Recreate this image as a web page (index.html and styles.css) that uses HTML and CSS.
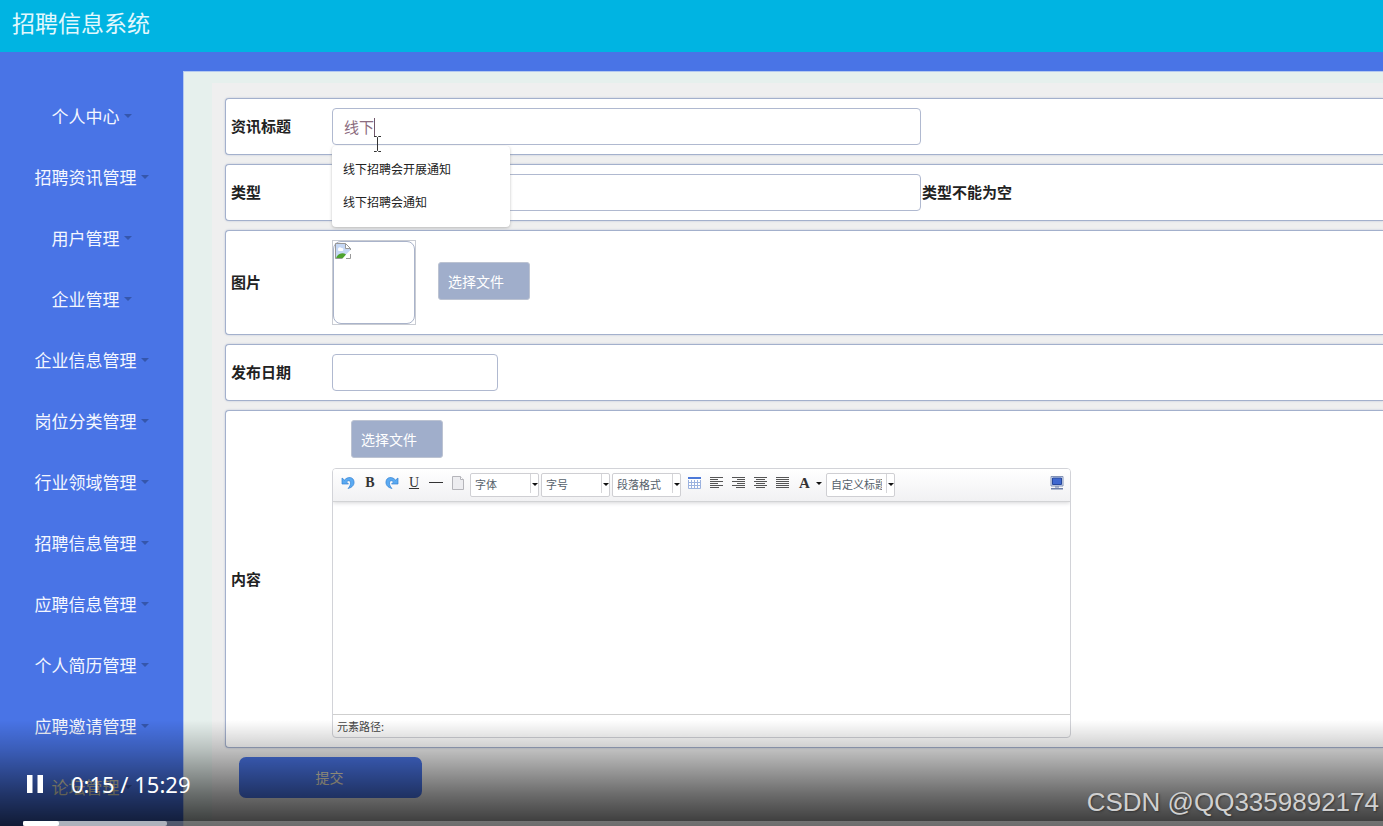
FILE: index.html
```html
<!DOCTYPE html>
<html lang="zh-CN">
<head>
<meta charset="utf-8">
<title>招聘信息系统</title>
<link rel="stylesheet" href="styles.css">
</head>
<body>
<div class="screen">
  <header class="topbar"><h1 class="brand">招聘信息系统</h1></header>
  <div class="layout">
    <nav class="sidebar">
      <button class="nav-item" type="button">个人中心<span class="caret"></span></button>
      <button class="nav-item" type="button">招聘资讯管理<span class="caret"></span></button>
      <button class="nav-item" type="button">用户管理<span class="caret"></span></button>
      <button class="nav-item" type="button">企业管理<span class="caret"></span></button>
      <button class="nav-item" type="button">企业信息管理<span class="caret"></span></button>
      <button class="nav-item" type="button">岗位分类管理<span class="caret"></span></button>
      <button class="nav-item" type="button">行业领域管理<span class="caret"></span></button>
      <button class="nav-item" type="button">招聘信息管理<span class="caret"></span></button>
      <button class="nav-item" type="button">应聘信息管理<span class="caret"></span></button>
      <button class="nav-item" type="button">个人简历管理<span class="caret"></span></button>
      <button class="nav-item" type="button">应聘邀请管理<span class="caret"></span></button>
      <button class="nav-item nav-dim" type="button">论坛管理<span class="caret"></span></button>
    </nav>
    <main class="content">
      <form class="form">
        <div class="row">
          <label class="label" for="title">资讯标题</label>
          <div class="field">
            <input class="text wide" id="title" type="text" value="线下" autocomplete="off">
            <span class="text-caret"></span>
            <svg class="pointer" width="9" height="16" viewBox="0 0 9 16" fill="none" stroke="#333"><path d="M1 .5h2.500l1 1 1-1H8M4.500 1.500v13M1 15.500h2.500l1-1 1 1H8"/></svg>
            <ul class="suggest">
              <li>线下招聘会开展通知</li>
              <li>线下招聘会通知</li>
            </ul>
          </div>
        </div>
        <div class="row">
          <label class="label" for="type">类型</label>
          <div class="field">
            <input class="text wide" id="type" type="text">
            <span class="error">类型不能为空</span>
          </div>
        </div>
        <div class="row">
          <span class="label">图片</span>
          <div class="field">
            <div class="preview"><div class="preview-frame">
              <svg width="16" height="16" viewBox="0 0 16 16"><path d="M.5 15.500V.500h10l5 5V7L7 15.500z" fill="#c6d8f5"/><path d="M3 6.500c0-2 2-3 3.500-1.500C9 4.500 9 8 7 8H4.500C3 8 2.500 7 3 6.500z" fill="#fff"/><path d="M1 15.500c1-4 6-7 10-4L7.500 15.500z" fill="#4ea32f"/><path d="M10.500.500v5h5z" fill="#fff"/><path d="M7 15.500H.500V.500h10l5 5V7M10.500.500v5h5M11 15.500h4.500V11" fill="none" stroke="#999"/></svg>
            </div></div>
            <button class="file" type="button">选择文件</button>
          </div>
        </div>
        <div class="row">
          <label class="label" for="date">发布日期</label>
          <div class="field"><input class="text short" id="date" type="text"></div>
        </div>
        <div class="row">
          <label class="label" for="body">内容</label>
          <div class="field stack">
            <button class="file indent" type="button">选择文件</button>
            <div class="editor">
              <div class="toolbar">
                <button class="tool" type="button" aria-label="撤销"><svg width="14" height="14" viewBox="0 0 14 14"><path d="M1 2v6h6.500L5.500 6C7 4 9.500 4.300 9.500 7c0 2-.8 3.800-2.500 5.500 4.500-1 6.500-4 6-7C12.500 1 7 0 3.500 4z" fill="#5aaaf2" stroke="#3582d2" stroke-width=".7"/></svg></button>
                <button class="tool glyph" type="button" aria-label="加粗">B</button>
                <button class="tool" type="button" aria-label="重做"><svg width="14" height="14" viewBox="0 0 14 14"><path d="M13 2v6H6.500l2-2C7 4 4.500 4.300 4.500 7c0 2 .8 3.800 2.500 5.500-4.500-1-6.500-4-6-7C1.500 1 7 0 10.500 4z" fill="#5aaaf2" stroke="#3582d2" stroke-width=".7"/></svg></button>
                <button class="tool glyph under" type="button" aria-label="下划线">U</button>
                <button class="tool" type="button" aria-label="分隔线"><svg width="14" height="14" viewBox="0 0 14 14"><path d="M0 6.500h14" stroke="#333"/></svg></button>
                <button class="tool" type="button" aria-label="新建"><svg width="12" height="14" viewBox="0 0 12 14"><path d="M.5.500h8l3 3v10H.500z" fill="#ededf0" stroke="#b5b5ba"/><path d="M8.500.500v3h3" fill="#fff" stroke="#b5b5ba"/></svg></button>
                <span class="combo"><select aria-label="字体"><option>字体</option></select></span>
                <span class="combo"><select aria-label="字号"><option>字号</option></select></span>
                <span class="combo"><select aria-label="段落格式"><option>段落格式</option></select></span>
                <button class="tool" type="button" aria-label="表格"><svg width="14" height="14" viewBox="0 0 14 14"><path d="M.5 1.500h12v10H.500z" fill="#fff"/><path d="M.5 4v8.500h12V4M3.500 4v8.500M6.500 4v8.500M9.500 4v8.500M.500 6.500h12M.500 9.500h12" fill="none" stroke="#9bb2df"/><path d="M0 1h13v2H0z" fill="#4c79d8"/></svg></button>
                <button class="tool" type="button" aria-label="左对齐"><svg width="14" height="14" viewBox="0 0 14 14"><path d="M0 1.500h13M0 3.500h8M0 5.500h13M0 7.500h8M0 9.500h13M0 11.500h9" stroke="#555"/></svg></button>
                <button class="tool" type="button" aria-label="右对齐"><svg width="14" height="14" viewBox="0 0 14 14"><path d="M0 1.500h13M5 3.500h8M0 5.500h13M5 7.500h8M0 9.500h13M4 11.500h9" stroke="#555"/></svg></button>
                <button class="tool" type="button" aria-label="居中"><svg width="14" height="14" viewBox="0 0 14 14"><path d="M0 1.500h13M2 3.500h9M0 5.500h13M2 7.500h9M0 9.500h13M2 11.500h9" stroke="#555"/></svg></button>
                <button class="tool" type="button" aria-label="两端对齐"><svg width="14" height="14" viewBox="0 0 14 14"><path d="M0 1.500h13M0 3.500h13M0 5.500h13M0 7.500h13M0 9.500h13M0 11.500h13" stroke="#555"/></svg></button>
                <button class="tool glyph color" type="button" aria-label="字体颜色">A<span class="tri"></span></button>
                <span class="combo"><select aria-label="自定义标题"><option>自定义标题</option></select></span>
                <button class="tool full" type="button" aria-label="全屏"><svg width="14" height="14" viewBox="0 0 14 14"><path d="M1 .500h12v9.500H1z" fill="#dfe7f7" stroke="#8292b5"/><path d="M2.500 2h9v6.500h-9z" fill="#3f68d0" stroke="#27489c"/><path d="M5 10.500h4v1H5zM1 12h12v1.500H1z" fill="#6d7fa8"/></svg></button>
              </div>
              <textarea class="area" id="body"></textarea>
              <div class="path">元素路径:</div>
            </div>
          </div>
        </div>
        <button class="submit" type="submit">提交</button>
      </form>
    </main>
  </div>
  <div class="player">
    <div class="controls">
      <button class="pause" type="button" aria-label="暂停"><svg width="16" height="18" viewBox="0 0 16 18" fill="#fff"><path d="M0 0h5.500v18H0zM10.500 0H16v18h-5.500z"/></svg></button>
      <span class="time">0:15 / 15:29</span>
    </div>
    <div class="track"><div class="buffered"><div class="played"></div></div></div>
  </div>
  <div class="watermark">CSDN @QQ3359892174</div>
</div>
</body>
</html>
```

FILE: styles.css
```css
* { box-sizing: border-box; }
body {
  margin: 0;
  font-family: "Noto Sans CJK SC", sans-serif;
  color: #222;
}
button, input, select, textarea { font-family: inherit; }
.screen {
  position: relative;
  display: flex;
  flex-direction: column;
  height: 100vh;
  overflow: hidden;
  background: #4974e6;
}
.topbar {
  flex: none;
  padding: 5px 12px 13px;
  background: #00b4e2;
}
.brand {
  margin: 0;
  font-size: 23px;
  line-height: 34px;
  font-weight: 400;
  color: #e2f8fd;
}
.layout { display: flex; flex: 1; min-height: 0; }
.sidebar {
  flex: none;
  width: 183px;
  padding-top: 33px;
}
.nav-item {
  display: flex;
  align-items: center;
  justify-content: center;
  gap: 4px;
  width: 100%;
  height: 61px;
  padding: 0;
  border: 0;
  background: none;
  font-size: 17px;
  color: #f4f7ff;
}
.nav-dim { color: #d8d4b8; }
.caret {
  border: 4px solid transparent;
  border-top-color: #3556ac;
  border-bottom: 0;
}
.content {
  flex: 1;
  min-width: 0;
  margin-top: 19px;
  padding: 11px 0 0 28px;
  border: solid #b4c9f0;
  border-width: 1px 0 0 1px;
  background: #e6f0ed;
}
.form {
  display: flex;
  flex-direction: column;
  gap: 9px;
  min-height: 100%;
  padding: 15px 0 20px 13px;
  background: #efefef;
}
.row {
  display: flex;
  align-items: center;
  padding: 9px 0 9px 5px;
  border: 1px solid #a3b0cc;
  border-right: 0;
  border-radius: 4px 0 0 4px;
  background: #fff;
  box-shadow: 0 0 2px #b5bfd4;
}
.label {
  flex: none;
  width: 101px;
  padding-bottom: 2px;
  font-size: 15px;
  font-weight: 700;
}
.field {
  position: relative;
  display: flex;
  align-items: center;
}
.stack { flex-direction: column; align-items: flex-start; gap: 10px; }
.text {
  height: 37px;
  padding: 0 11px;
  border: 1px solid #b0b9d0;
  border-radius: 4px;
  background: #fff;
  font-size: 15px;
  color: #8c6c80;
  outline: 0;
}
.wide { width: 589px; }
.short { width: 166px; }
.text-caret {
  position: absolute;
  top: 10px;
  left: 42px;
  width: 1px;
  height: 19px;
  background: #70566a;
}
.pointer {
  position: absolute;
  z-index: 3;
  top: 28px;
  left: 41px;
}
.suggest {
  position: absolute;
  z-index: 2;
  top: 38px;
  left: 0;
  width: 178px;
  margin: 0;
  padding: 6px 0 9px;
  border-radius: 4px;
  background: #fff;
  box-shadow: 0 1px 3px #8888;
  list-style: none;
  font-size: 12px;
  line-height: 33px;
}
.suggest li { padding-left: 11px; }
.error { padding: 0 0 2px 1px; font-size: 15px; font-weight: 700; }
.preview {
  width: 84px;
  height: 85px;
  border: 1px solid #c9ccd3;
}
.preview-frame {
  height: 100%;
  padding: 1px;
  border: 1px solid #a9b3ca;
  border-radius: 8px;
  line-height: 0;
}
.file {
  width: 92px;
  height: 38px;
  padding: 0 9px 1px;
  border: 1px solid #bcc3d2;
  border-radius: 3px;
  background: #a0aecb;
  font-size: 14px;
  text-align: left;
  color: #fff;
}
.preview + .file { margin: 0 0 3px 22px; }
.indent { margin-left: 19px; }
.editor {
  width: 739px;
  border: 1px solid #d2d3d8;
  border-radius: 4px;
  overflow: hidden;
}
.toolbar {
  position: relative;
  display: flex;
  align-items: flex-start;
  gap: 2px;
  height: 33px;
  padding: 4px 5px;
  border-bottom: 1px solid #d2d3d5;
  background: linear-gradient(#fff, #f1f1f3);
  box-shadow: 0 1px 4px #d5d5d8;
}
.tool {
  display: flex;
  align-items: center;
  justify-content: center;
  width: 20px;
  height: 20px;
  padding: 0;
  border: 0;
  background: none;
}
.combo + .tool { margin-left: 2px; }
.glyph {
  font: 700 14px/20px "Liberation Serif", serif;
  color: #333;
}
.under { font-weight: 400; text-decoration: underline; }
.color { gap: 6px; width: 29px; padding-left: 2px; font-size: 15px; }
.toolbar .full { margin-left: auto; margin-right: -2px; }
.tri, .combo::after {
  content: "";
  border: 3px solid transparent;
  border-top-color: #111;
  border-bottom: 0;
}
.combo {
  position: relative;
  display: flex;
  align-items: flex-start;
  width: 69px;
  height: 24px;
  border: 1px solid #cfcfd3;
  border-radius: 2px;
  background: #fff;
}
.combo::after { position: absolute; top: 9px; right: 0; }
.combo select {
  width: 60px;
  height: 19px;
  padding: 0 4px;
  border: 0;
  border-right: 1px solid #d5d5d8;
  border-radius: 0;
  appearance: none;
  background: none;
  font-size: 11px;
  color: #56616b;
}
.area {
  display: block;
  width: 100%;
  height: 212px;
  border: 0;
  resize: none;
  background: transparent;
  outline: 0;
}
.path {
  height: 23px;
  padding-left: 4px;
  border-top: 1px solid #cfcfcf;
  font-size: 11px;
  line-height: 22px;
  color: #444;
}
.submit {
  flex: none;
  width: 183px;
  height: 41px;
  margin-left: 14px;
  padding: 0 2px 2px 0;
  border: 0;
  border-radius: 7px;
  background: #4974e6;
  font-size: 14px;
  color: #e6dfc2;
}
.player {
  position: absolute;
  z-index: 5;
  right: 0;
  bottom: 0;
  left: 0;
  padding-top: 47px;
  background: linear-gradient(#0000, #0003 28%, #0000008c 70%, #000000c4);
}
.controls {
  display: flex;
  align-items: center;
  gap: 28px;
  height: 34px;
  padding-left: 27px;
}
.pause { display: flex; padding: 0; border: 0; background: none; }
.time {
  font: 22px/34px "Noto Sans", sans-serif;
  color: #fff;
}
.track {
  height: 5px;
  margin: 20px 0 0 23px;
  background: #fff4;
}
.buffered { width: 144px; height: 5px; border-radius: 2px; background: #fff8; }
.played { width: 36px; height: 5px; border-radius: 2px; background: #fff; }
.watermark {
  position: absolute;
  z-index: 6;
  right: 4px;
  bottom: 8px;
  font: 26px/32px "Liberation Sans", sans-serif;
  color: #d0d0d0;
  text-shadow: 1px 1px 2px #333;
}
```
